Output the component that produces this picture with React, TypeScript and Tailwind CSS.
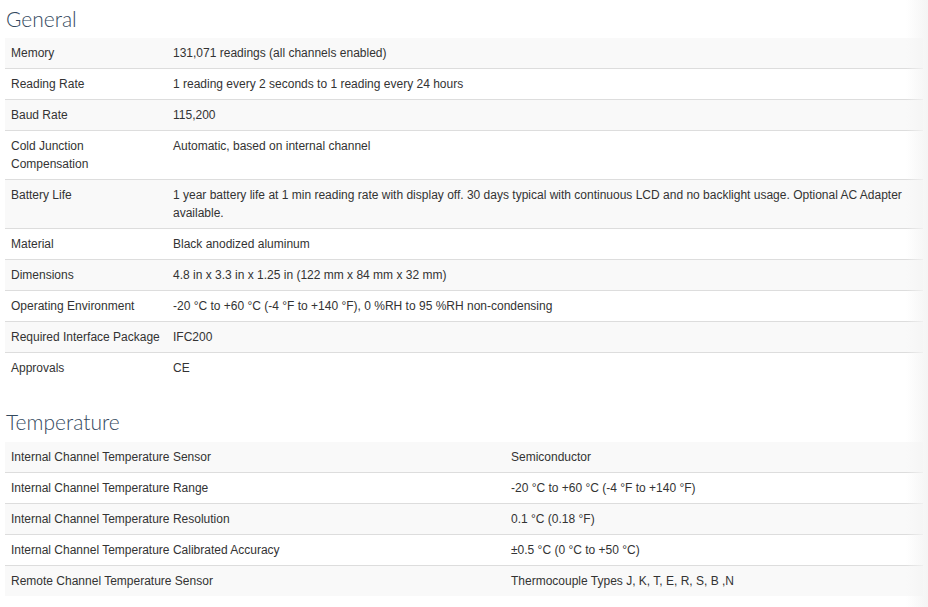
import React from "react";

const general: [string, string][] = [
  ["Memory", "131,071 readings (all channels enabled)"],
  ["Reading Rate", "1 reading every 2 seconds to 1 reading every 24 hours"],
  ["Baud Rate", "115,200"],
  ["Cold Junction Compensation", "Automatic, based on internal channel"],
  [
    "Battery Life",
    "1 year battery life at 1 min reading rate with display off. 30 days typical with continuous LCD and no backlight usage. Optional AC Adapter available.",
  ],
  ["Material", "Black anodized aluminum"],
  ["Dimensions", "4.8 in x 3.3 in x 1.25 in (122 mm x 84 mm x 32 mm)"],
  ["Operating Environment", "-20 °C to +60 °C (-4 °F to +140 °F), 0 %RH to 95 %RH non-condensing"],
  ["Required Interface Package", "IFC200"],
  ["Approvals", "CE"],
];

const temperature: [string, string][] = [
  ["Internal Channel Temperature Sensor", "Semiconductor"],
  ["Internal Channel Temperature Range", "-20 °C to +60 °C (-4 °F to +140 °F)"],
  ["Internal Channel Temperature Resolution", "0.1 °C (0.18 °F)"],
  ["Internal Channel Temperature Calibrated Accuracy", "±0.5 °C (0 °C to +50 °C)"],
  ["Remote Channel Temperature Sensor", "Thermocouple Types J, K, T, E, R, S, B ,N"],
];

function SpecTable({ rows, firstWidth }: { rows: [string, string][]; firstWidth: string }) {
  return (
    <table className="w-full border-collapse text-[12px] leading-[18px] text-[#333]">
      <tbody>
        {rows.map(([k, v], i) => (
          <tr key={k} className={i % 2 === 0 ? "bg-[#f9f9f9]" : "bg-white"}>
            <td
              className={`${firstWidth} align-top px-[6px] py-[6px] ${i > 0 ? "border-t border-[#dddddd]" : ""}`}
            >
              {k}
            </td>
            <td className={`align-top px-[6px] py-[6px] ${i > 0 ? "border-t border-[#dddddd]" : ""}`}>{v}</td>
          </tr>
        ))}
      </tbody>
    </table>
  );
}

export default function App() {
  return (
    <div
      className="relative w-[928px] h-[607px] overflow-hidden bg-white px-[5px]"
      style={{ fontFamily: '"Liberation Sans", Arial, sans-serif' }}
    >
      <h2
        className="text-[21px] leading-[26px] pt-[6px] pb-[6px] pl-[1px] font-light text-[#34495e]"
        style={{ fontFamily: 'Lato, "Open Sans", sans-serif' }}
      >
        General
      </h2>
      <SpecTable rows={general} firstWidth="w-[162px]" />
      <h2
        className="mt-[20px] text-[21px] leading-[26px] pt-[6px] pb-[7px] pl-[1px] font-light text-[#34495e]"
        style={{ fontFamily: 'Lato, "Open Sans", sans-serif' }}
      >
        Temperature
      </h2>
      <SpecTable rows={temperature} firstWidth="w-[500px]" />
      <div className="pointer-events-none absolute right-0 top-0 h-full w-[22px] bg-gradient-to-r from-transparent to-[#f4f4f4]" />
    </div>
  );
}
